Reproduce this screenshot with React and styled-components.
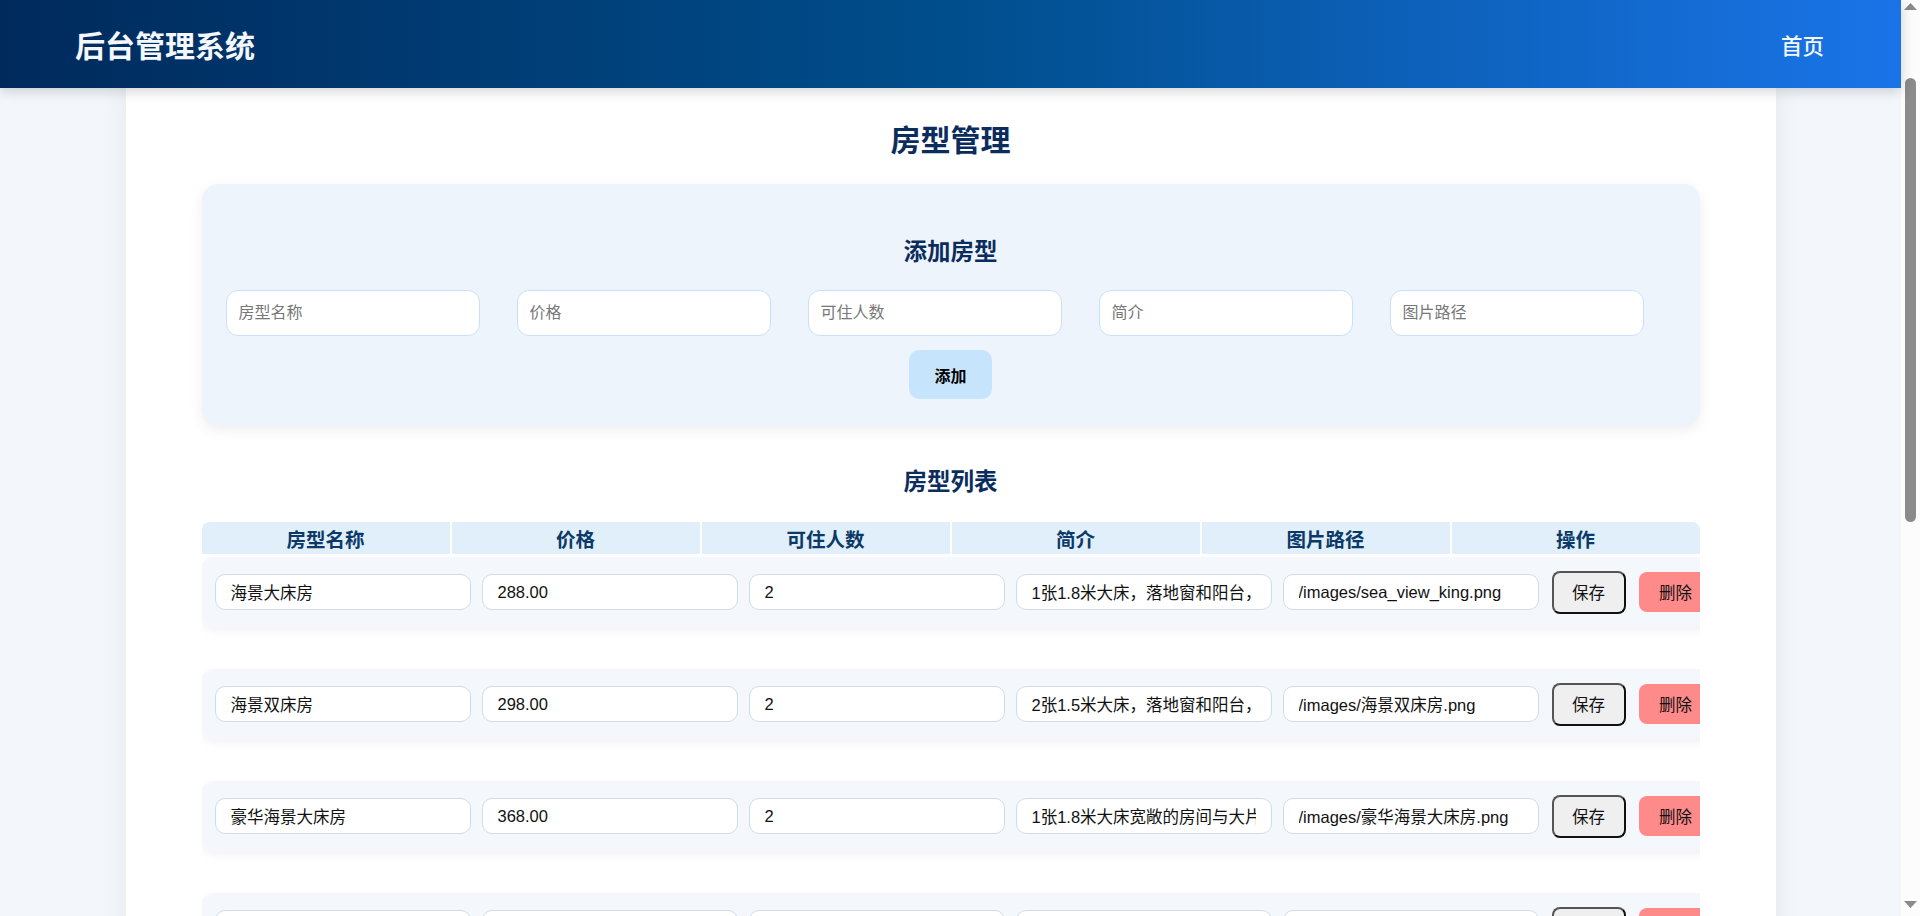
import React from 'react';
import styled, { createGlobalStyle } from 'styled-components';

const Global = createGlobalStyle`
  html, body { margin: 0; padding: 0; }
  body {
    background: #f3f7fb;
    font-family: "Noto Sans CJK SC", "Noto Sans", sans-serif;
  }
  * { box-sizing: border-box; }
`;

const Root = styled.div`
  display: flex;
  align-items: flex-start;
`;

const Page = styled.div`
  flex: 1;
  min-width: 0;
`;

const Rail = styled.div`
  position: sticky;
  top: 0;
  flex: 0 0 19px;
  width: 19px;
  height: 100vh;
  display: flex;
  flex-direction: column;
  align-items: center;
  background: #fcfcfc;
`;

const Arrow = styled.svg`
  display: block;
  width: 13px;
  height: 7px;
  margin: ${(p) => (p.$down ? 'auto 0 8px' : '3px 0 0')};
  fill: #8a8a8a;
`;

const Thumb = styled.div`
  width: 11px;
  height: 444px;
  margin-top: 68px;
  border-radius: 6px;
  background: #8b8b8b;
`;

const Header = styled.header`
  position: sticky;
  top: 0;
  z-index: 10;
  height: 88px;
  display: flex;
  align-items: center;
  justify-content: space-between;
  padding: 0 77px 0 75px;
  background: linear-gradient(90deg, #002a5c 0%, #004e8c 50%, #1a74e8 100%);
  box-shadow: 0 3px 12px rgba(0, 0, 0, 0.18);
  color: #fff;
`;

const Brand = styled.div`
  font-size: 30px;
  font-weight: 700;
  line-height: 1;
  color: #f4f7fb;
`;

const NavLink = styled.a`
  font-size: 21.5px;
  font-weight: 500;
  color: #f4f7fb;
  text-decoration: none;
  cursor: pointer;
`;

const Main = styled.main`
  width: 1650px;
  margin: 0 auto;
  background: #fff;
  padding: 28px 76px 60px;
  box-shadow: 0 0 24px rgba(0, 0, 0, 0.07);
`;

const PageTitle = styled.h1`
  margin: 0;
  font-size: 30px;
  line-height: 45px;
  font-weight: 700;
  text-align: center;
  color: #0b2d5e;
`;

const Panel = styled.section`
  margin-top: 23px;
  background: #eef4fc;
  border-radius: 16px;
  padding: 24px 24px 27px;
  box-shadow: 0 4px 14px rgba(0, 0, 0, 0.07);
`;

const SectionTitle = styled.h2`
  margin: ${(p) => p.$margin};
  font-size: 23.5px;
  line-height: 36px;
  font-weight: 700;
  text-align: center;
  color: #0b2d5e;
`;

const FormRow = styled.div`
  display: flex;
  gap: 37px;
`;

const FormInput = styled.input`
  width: 254px;
  height: 46px;
  border: 1.5px solid #cbe0f6;
  border-radius: 12px;
  padding: 0 12px;
  background: #fff;
  font-size: 16px;
  font-family: "Liberation Sans", "Noto Sans CJK SC", sans-serif;
  color: #222;
  outline: none;
  &::placeholder { color: #777; }
`;

const AddButton = styled.button`
  display: block;
  margin: 14px auto 0;
  width: 83px;
  height: 49px;
  border: none;
  border-radius: 10px;
  background: #c6e5fc;
  font-family: "Noto Sans CJK SC", sans-serif;
  font-size: 16px;
  font-weight: 700;
  color: #000;
  cursor: pointer;
`;

const TableWrap = styled.div`
  overflow: hidden;
`;

const HeadRow = styled.div`
  display: grid;
  grid-template-columns: repeat(6, 1fr);
  gap: 2px;
  border-radius: 8px 8px 0 0;
  overflow: hidden;
`;

const HeadCell = styled.div`
  height: 32px;
  display: flex;
  align-items: center;
  justify-content: center;
  background: #e1effb;
  font-size: 19.5px;
  font-weight: 700;
  color: #0b3a68;
`;

const Body = styled.div`
  padding-top: 3px;
`;

const Row = styled.div`
  display: flex;
  align-items: center;
  gap: 11px;
  width: max-content;
  min-width: 100%;
  height: 70px;
  padding: 0 13px;
  margin-bottom: 42px;
  background: #f4f8fd;
  border-radius: 12px;
  box-shadow: 0 4px 10px rgba(0, 0, 0, 0.05);
`;

const CellInput = styled.input`
  flex: 0 0 256px;
  width: 256px;
  height: 36px;
  border: 1px solid #cddcec;
  border-radius: 10px;
  padding: 0 15px;
  background: #fff;
  font-size: 16.5px;
  font-family: "Liberation Sans", "Noto Sans CJK SC", sans-serif;
  color: #111;
  outline: none;
`;

const ActionButton = styled.button`
  flex: 0 0 74px;
  width: 74px;
  margin-left: 2px;
  height: ${(p) => (p.$danger ? '40px' : '43px')};
  border-radius: 8px;
  border: ${(p) => (p.$danger ? 'none' : '2px solid')};
  border-color: #555 #111 #111 #555;
  background: ${(p) => (p.$danger ? '#ff8a8a' : '#efefef')};
  font-family: "Liberation Sans", "Noto Sans CJK SC", sans-serif;
  font-size: 16.5px;
  color: #111;
  cursor: pointer;
`;

const rooms = [
  ['海景大床房', '288.00', '2', '1张1.8米大床，落地窗和阳台，可直接欣赏海景', '/images/sea_view_king.png'],
  ['海景双床房', '298.00', '2', '2张1.5米大床，落地窗和阳台，可直接欣赏海景', '/images/海景双床房.png'],
  ['豪华海景大床房', '368.00', '2', '1张1.8米大床宽敞的房间与大片落地窗', '/images/豪华海景大床房.png'],
  ['豪华海景双床房', '398.00', '2', '2张1.5米大床宽敞的房间与大片落地窗', '/images/豪华海景双床房.png'],
  ['家庭亲子房', '458.00', '3', '1张1.8米大床和1张1.2米小床，适合家庭入住', '/images/家庭亲子房.png'],
  ['行政套房', '588.00', '2', '独立客厅与卧室，全景落地窗', '/images/行政套房.png'],
  ['园景大床房', '238.00', '2', '1张1.8米大床，面朝花园', '/images/园景大床房.png'],
  ['园景双床房', '248.00', '2', '2张1.2米单人床，面朝花园', '/images/园景双床房.png'],
  ['山景房', '268.00', '2', '1张1.8米大床，可欣赏山景', '/images/山景房.png'],
  ['情侣主题房', '328.00', '2', '圆形大床，浪漫主题布置', '/images/情侣主题房.png'],
  ['总统套房', '1288.00', '4', '两室一厅，私人管家服务', '/images/总统套房.png'],
];

const headers = ['房型名称', '价格', '可住人数', '简介', '图片路径', '操作'];
const placeholders = ['房型名称', '价格', '可住人数', '简介', '图片路径'];

export default function App() {
  return (
    <Root>
      <Global />
      <Page>
        <Header>
          <Brand>后台管理系统</Brand>
          <NavLink>首页</NavLink>
        </Header>
        <Main>
          <PageTitle>房型管理</PageTitle>
          <Panel>
            <SectionTitle $margin="24px 0 22px">添加房型</SectionTitle>
            <FormRow>
              {placeholders.map((p) => (
                <FormInput key={p} placeholder={p} />
              ))}
            </FormRow>
            <AddButton>添加</AddButton>
          </Panel>
          <SectionTitle $margin="36px 0 24px">房型列表</SectionTitle>
          <TableWrap>
            <HeadRow>
              {headers.map((h) => (
                <HeadCell key={h}>{h}</HeadCell>
              ))}
            </HeadRow>
            <Body>
              {rooms.map((r, i) => (
                <Row key={i}>
                  {r.map((v, j) => (
                    <CellInput key={j} defaultValue={v} />
                  ))}
                  <ActionButton>保存</ActionButton>
                  <ActionButton $danger>删除</ActionButton>
                </Row>
              ))}
            </Body>
          </TableWrap>
        </Main>
      </Page>
      <Rail aria-hidden="true">
        <Arrow viewBox="0 0 13 7"><polygon points="6.5,0 13,7 0,7" /></Arrow>
        <Thumb />
        <Arrow $down viewBox="0 0 13 7"><polygon points="0,0 13,0 6.5,7" /></Arrow>
      </Rail>
    </Root>
  );
}
